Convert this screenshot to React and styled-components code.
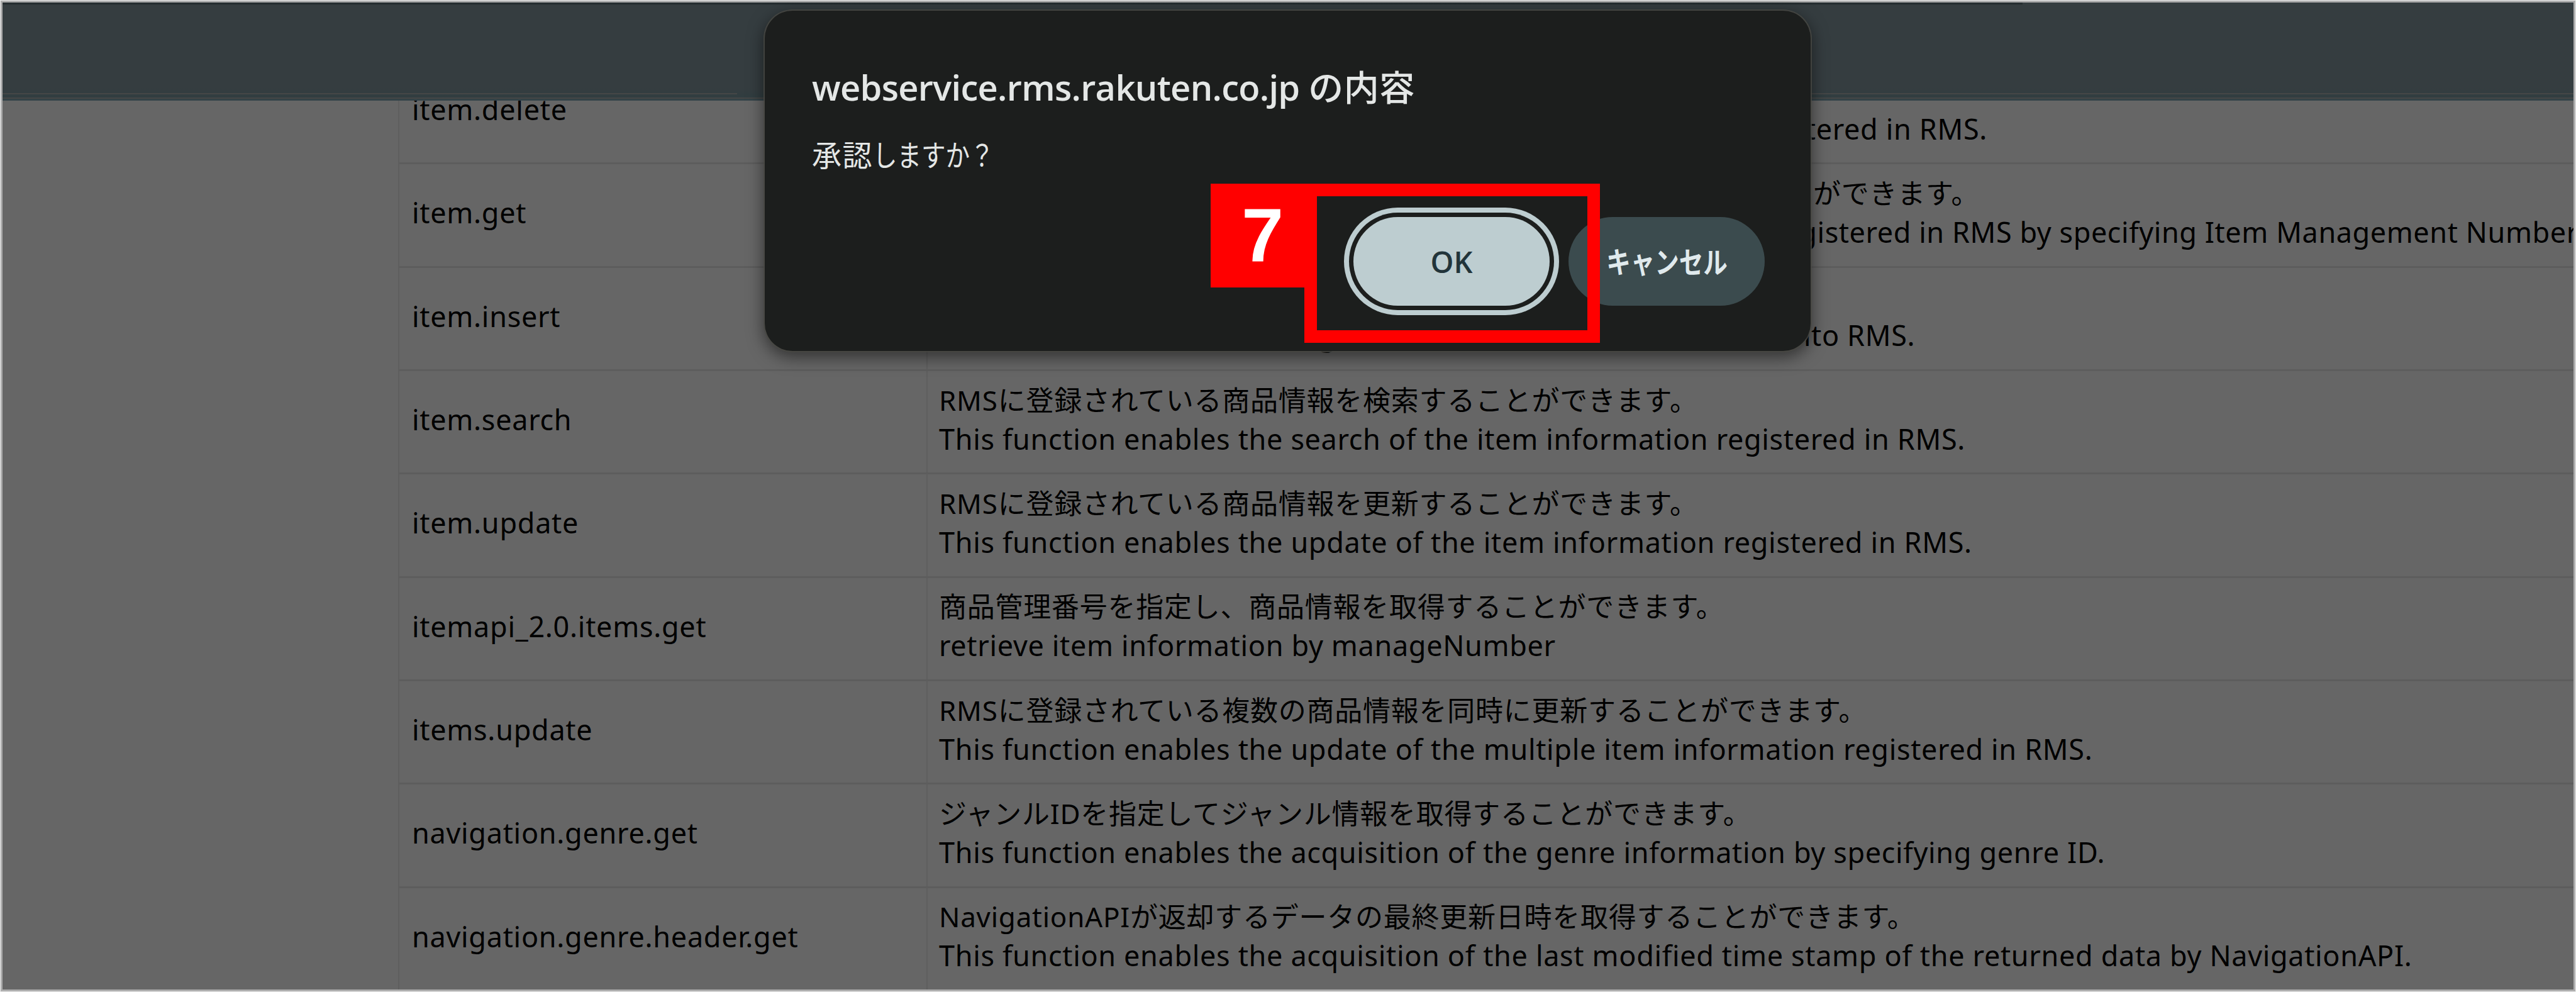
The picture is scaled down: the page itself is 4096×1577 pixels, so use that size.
import styled, { createGlobalStyle } from "styled-components"

const GlobalStyle = createGlobalStyle`
  * {
    box-sizing: border-box;
  }
  body {
    margin: 0;
    background: #ececec;
    overflow: hidden;
  }
`

const Screen = styled.div`
  position: relative;
  display: flex;
  flex-direction: column;
  width: 4096px;
  height: 1577px;
  border: 1px solid #ececec;
  overflow: hidden;
`

const Frame = styled.div`
  flex: 1;
  display: flex;
  flex-direction: column;
  border: 3px solid #aeaeae;
  background: #666666;
  overflow: hidden;
`

const Header = styled.header`
  flex: none;
  height: 156px;
  display: flex;
  flex-direction: column;
  background: linear-gradient(#353d40 0, #353d40 136px, #303d40 152px);
  border-bottom: 2px solid #35444a;
`

const TopShade = styled.div`
  width: 3212px;
  height: 4px;
  margin-bottom: 140px;
  background: linear-gradient(#20282b, #2f373a);
`

const Lines = styled.div`
  display: flex;
  justify-content: space-between;
  height: 2px;
  margin-bottom: 5px;
`

const Line = styled.div`
  width: ${(props) => props.$width};
  height: 2px;
  background: #454747;
`

const Content = styled.main`
  flex: 1;
  overflow: hidden;
  padding-left: 629px;
`

const List = styled.div`
  margin-top: -63px;
  border-left: 2px solid #5e5e5e;
  font-family: "Noto Sans", "Noto Sans CJK JP", sans-serif;
  font-size: 45px;
  line-height: 62px;
  letter-spacing: 0.7px;
  color: #000;
  white-space: nowrap;
`

const Row = styled.div`
  display: grid;
  grid-template-columns: 838px 1fr;
  height: 164.34px;
  border-bottom: 3px solid #5d5d5d;
`

const Name = styled.div`
  display: flex;
  align-items: center;
  padding: 0 0 7px 20px;
`

const Description = styled.div`
  display: flex;
  flex-direction: column;
  justify-content: center;
  padding: 0 0 7px 18px;
  border-left: 2px solid #5e5e5e;
`

const Japanese = styled.span`
  font-size: 44px;
  line-height: 61px;
  letter-spacing: 0.75px;
`

const English = styled.span`
  letter-spacing: ${(props) => props.$tracking || "0.65px"};
`

const Dialog = styled.section`
  position: absolute;
  top: 16px;
  left: 1215px;
  width: 1663px;
  height: 541px;
  padding: 87px 73px 0 75px;
  display: flex;
  flex-direction: column;
  border-radius: 44px;
  background: #1c1e1d;
  box-shadow: 0 0 0 2px rgba(72, 72, 68, 0.8), 0 8px 26px 2px rgba(0, 0, 0, 0.5);
  color: #e4e7e6;
  font-family: "Open Sans", "Noto Sans CJK JP", sans-serif;
  white-space: nowrap;
`

const Title = styled.h1`
  margin: 0;
  font-size: 56px;
  font-weight: 600;
  line-height: 68px;
  letter-spacing: -0.7px;
`

const TitleSuffix = styled.span`
  font-weight: 500;
  letter-spacing: 0.5px;
`

const Message = styled.p`
  margin: 44px 0 0;
  font-size: 47px;
  line-height: 60px;
  letter-spacing: 1.5px;
`

const Kana = styled.span`
  display: inline-block;
  letter-spacing: 0;
  transform: scaleX(0.82);
  transform-origin: left;
`

const Actions = styled.div`
  display: flex;
  justify-content: flex-end;
  gap: 30px;
  margin-top: 69px;
`

const Button = styled.button`
  width: 312px;
  height: 141px;
  display: flex;
  align-items: center;
  justify-content: center;
  padding: 0;
  border: 0;
  border-radius: 71px;
  font-family: inherit;
  font-size: 47px;
  font-weight: 600;
  background: ${(props) => (props.$primary ? "#bdcdd0" : "#3b4b4e")};
  color: ${(props) => (props.$primary ? "#22343a" : "#e0eaed")};
  box-shadow: ${(props) => (props.$primary ? "0 0 0 7px #1c1e1d, 0 0 0 15px #bdcdd0" : "none")};
`

const CancelLabel = styled(Kana)`
  transform-origin: center;
  padding-bottom: 4px;
`

const Highlight = styled.div`
  position: absolute;
  top: 291px;
  left: 2073px;
  width: 470px;
  height: 253px;
  border: 20px solid #ff0000;
`

const Step = styled.div`
  position: absolute;
  top: 291px;
  left: 1924px;
  width: 165px;
  height: 165px;
  background: #ff0000;
  color: #fff;
  font: bold 120px/163px "Liberation Sans", Arial, sans-serif;
  text-align: center;
`

const apis = [
  {
    name: "item.delete",
    ja: "RMSに登録されている商品情報を削除することができます。",
    en: "This function enables the deletion of the item information registered in RMS.",
  },
  {
    name: "item.get",
    ja: "商品管理番号を指定しRMSに登録されている商品情報を取得することができます。",
    en: "This function enables the acquisition of the item information registered in RMS by specifying Item Management Number.",
    tracking: "0.56px",
  },
  {
    name: "item.insert",
    ja: "RMSに商品情報を登録することができます。",
    en: "This function enables the registration of the item information into RMS.",
  },
  {
    name: "item.search",
    ja: "RMSに登録されている商品情報を検索することができます。",
    en: "This function enables the search of the item information registered in RMS.",
  },
  {
    name: "item.update",
    ja: "RMSに登録されている商品情報を更新することができます。",
    en: "This function enables the update of the item information registered in RMS.",
  },
  {
    name: "itemapi_2.0.items.get",
    ja: "商品管理番号を指定し、商品情報を取得することができます。",
    en: "retrieve item information by manageNumber",
  },
  {
    name: "items.update",
    ja: "RMSに登録されている複数の商品情報を同時に更新することができます。",
    en: "This function enables the update of the multiple item information registered in RMS.",
  },
  {
    name: "navigation.genre.get",
    ja: "ジャンルIDを指定してジャンル情報を取得することができます。",
    en: "This function enables the acquisition of the genre information by specifying genre ID.",
  },
  {
    name: "navigation.genre.header.get",
    ja: "NavigationAPIが返却するデータの最終更新日時を取得することができます。",
    en: "This function enables the acquisition of the last modified time stamp of the returned data by NavigationAPI.",
  },
]

const App = () => {
  return (
    <>
      <GlobalStyle />
      <Screen>
        <Frame>
          <Header>
            <TopShade />
            <Lines>
              <Line $width="1168px" />
              <Line $width="1300px" />
            </Lines>
            <Line $width="100%" />
          </Header>
          <Content>
            <List>
              {apis.map((api) => (
                <Row key={api.name}>
                  <Name>{api.name}</Name>
                  <Description>
                    <Japanese lang="ja">{api.ja}</Japanese>
                    <English $tracking={api.tracking}>{api.en}</English>
                  </Description>
                </Row>
              ))}
            </List>
          </Content>
        </Frame>
        <Dialog lang="ja">
          <Title>
            webservice.rms.rakuten.co.jp <TitleSuffix>の内容</TitleSuffix>
          </Title>
          <Message>
            承認<Kana>しますか？</Kana>
          </Message>
          <Actions>
            <Button $primary>OK</Button>
            <Button>
              <CancelLabel>キャンセル</CancelLabel>
            </Button>
          </Actions>
        </Dialog>
        <Highlight />
        <Step>7</Step>
      </Screen>
    </>
  )
}

export default App
